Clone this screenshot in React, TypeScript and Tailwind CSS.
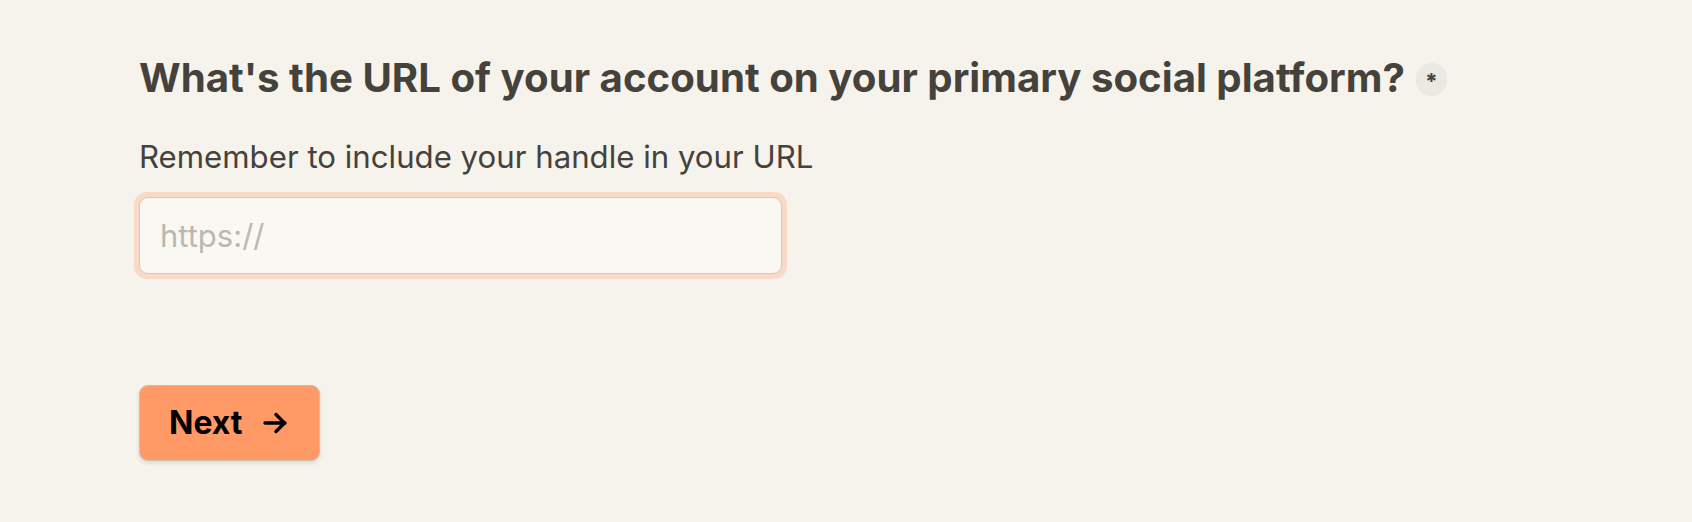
import React from "react";

export default function App() {
  return (
    <div
      className="min-h-screen w-full bg-[#f6f3ec] text-[#45423c]"
      style={{ fontFamily: "Inter, 'Noto Sans', sans-serif" }}
    >
      <div className="flex flex-col items-start pl-[139px] pt-[52px]">
        <h1 className="flex items-center text-[40.2px] leading-[52px] font-bold">
          <span>What's the URL of your account on your primary social platform?</span>
          <span className="ml-[11px] mt-[2px] flex h-[33px] w-[31px] items-center justify-center rounded-full bg-[#ebe9e2] pt-[4px] text-[22px] font-bold leading-none">
            *
          </span>
        </h1>

        <p className="mt-[33px] text-[31.2px] leading-[40px] font-normal">
          Remember to include your handle in your URL
        </p>

        <div className="mt-[15px] -ml-[5px] rounded-[13px] bg-[#f9dac7] p-[5px]">
          <input
            type="text"
            placeholder="https://"
            className="block h-[77px] w-[643px] rounded-[9px] border border-[#e8c3ae] bg-[#faf8f3] pl-[20px] text-[31px] text-[#45423c] outline-none placeholder:text-[#bbb8b0]"
          />
        </div>

        <button className="mt-[106px] flex h-[76px] w-[181px] items-center gap-[20px] rounded-[9px] border border-[#cdbfb2] bg-[#ff9966] pl-[29px] text-[32px] font-bold text-black shadow-[0_2px_4px_rgba(0,0,0,0.12)]">
          <span>Next</span>
          <svg width="25" height="22" viewBox="0 0 25 22" fill="none" stroke="currentColor" strokeWidth="3.4" strokeLinecap="round" strokeLinejoin="round">
            <path d="M2 11h20" />
            <path d="M13 2.5l8.5 8.5-8.5 8.5" />
          </svg>
        </button>
      </div>
    </div>
  );
}
